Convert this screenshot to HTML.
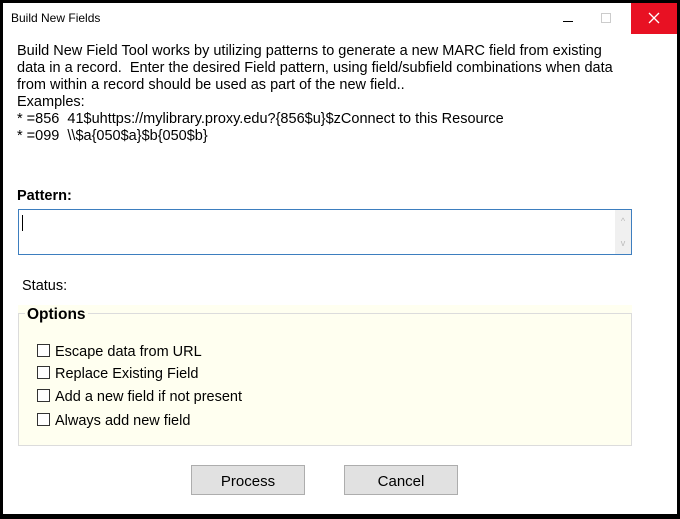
<!DOCTYPE html>
<html><head><style>
*{margin:0;padding:0;box-sizing:border-box}
body{width:680px;height:519px;background:#000;position:relative;overflow:hidden;font-family:"Liberation Sans",Arial,sans-serif;color:#000}
.win{position:absolute;left:3px;top:3px;width:674px;height:511px;background:#fff}
.abs{position:absolute;white-space:nowrap}
.t{font-size:14.5px;line-height:17px}
.cb{position:absolute;width:13px;height:13px;border:1px solid #333;background:#fff}
.btn{position:absolute;top:462px;width:114px;height:30px;background:#e1e1e1;border:1px solid #adadad;font-size:15px;text-align:center;line-height:31px}
</style></head><body>
<div class="win">
  <div class="abs" style="left:8px;top:8px;font-size:12px">Build New Fields</div>
  <div class="abs" style="left:560px;top:18px;width:10px;height:1px;background:#000"></div>
  <div class="abs" style="left:598px;top:10px;width:10px;height:10px;border:1px solid #ccc"></div>
  <div class="abs" style="left:628px;top:0;width:46px;height:31px;background:#e81123"></div>
  <svg class="abs" style="left:645px;top:9px" width="12" height="12"><path d="M1 1L11 11M11 1L1 11" stroke="#fff" stroke-width="1.3"/></svg>
  <div class="abs t" style="left:14px;top:40px">Build New Field Tool works by utilizing patterns to generate a new MARC field from existing<br>data in a record.&nbsp; Enter the desired Field pattern, using field/subfield combinations when data<br>from within a record should be used as part of the new field..<br>Examples:<br>* =856&nbsp; 41$uhttps://mylibrary.proxy.edu?{856$u}$zConnect to this Resource<br>* =099&nbsp; \\$a{050$a}$b{050$b}</div>
  <div class="abs t" style="left:14px;top:185px;font-weight:bold">Pattern:</div>
  <div class="abs" style="left:15px;top:206px;width:614px;height:46px;border:1px solid #3d7ebf;background:#fff">
    <div class="abs" style="left:3px;top:5px;width:1px;height:16px;background:#000"></div>
    <div class="abs" style="right:0;top:0;width:16px;height:44px;background:#f0f0f0;color:#bbb;font-size:9px;text-align:center;line-height:22px">^<br>v</div>
  </div>
  <div class="abs t" style="left:19px;top:275px">Status:</div>
  <div class="abs" style="left:15px;top:302px;width:614px;height:141px;background:#fffff0"></div>
  <div class="abs" style="left:15px;top:310px;width:614px;height:133px;border:1px solid #dcdcdc"></div>
  <div class="abs t" style="left:22px;top:303px;font-weight:bold;font-size:15.5px;background:#fffff0;padding:0 2px">Options</div>
  <div class="cb" style="left:34px;top:341px"></div><div class="abs t" style="left:52px;top:341px">Escape data from URL</div>
  <div class="cb" style="left:34px;top:363px"></div><div class="abs t" style="left:52px;top:363px">Replace Existing Field</div>
  <div class="cb" style="left:34px;top:386px"></div><div class="abs t" style="left:52px;top:386px">Add a new field if not present</div>
  <div class="cb" style="left:34px;top:410px"></div><div class="abs t" style="left:52px;top:410px">Always add new field</div>
  <div class="btn" style="left:188px">Process</div>
  <div class="btn" style="left:341px">Cancel</div>
</div>
</body></html>
